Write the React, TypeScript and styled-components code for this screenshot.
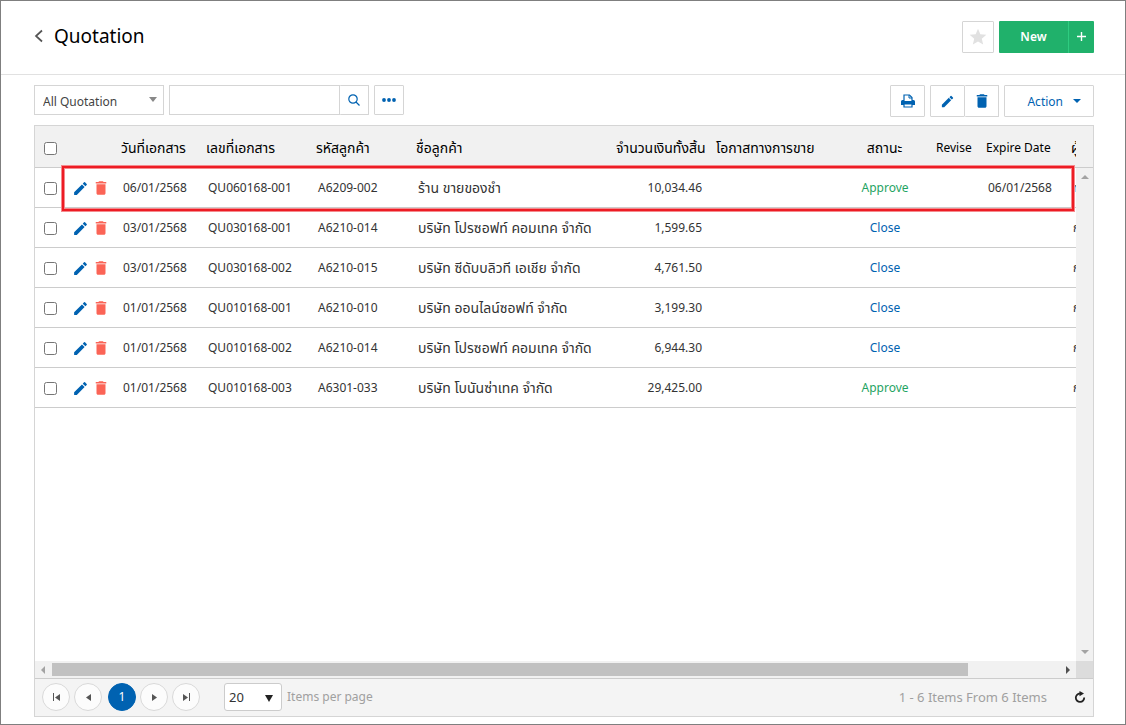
import React from 'react';
import styled, { createGlobalStyle } from 'styled-components';
import { MdDelete, MdEdit, MdStar } from 'react-icons/md';

const BLUE = '#0062b1';
const LINE = '#d5d5d5';

const GlobalStyle = createGlobalStyle`
  *, *::before, *::after { box-sizing: border-box; }
  body {
    margin: 0;
    background: #fff;
    color: #333;
    font-family: Tahoma, "Noto Sans", "Noto Sans Thai", sans-serif;
    font-size: 12px;
  }
  button, input, select { font: inherit; color: inherit; margin: 0; }
  button { cursor: pointer; padding: 0; }
  svg { display: block; flex: none; }
`;

const Page = styled.main`
  display: flex;
  flex-direction: column;
  min-height: 100vh;
  border: 1px solid #7f7f7f;
`;

const TopBar = styled.header`
  display: flex;
  align-items: center;
  justify-content: space-between;
  height: 74px;
  padding: 0 31px 2px 33px;
  border-bottom: 1px solid #e1e1e1;
`;

const TitleGroup = styled.div`
  display: flex;
  align-items: center;
  gap: 10px;
  padding-bottom: 2px;
`;

const BackLink = styled.a`
  color: #555;
`;

const Title = styled.h1`
  margin: 0;
  color: #000;
  font-size: 19px;
  font-weight: 400;
  line-height: 28px;
`;

const Group = styled.div<{ $gap?: number }>`
  display: flex;
  align-items: center;
  gap: ${({ $gap = 5 }) => $gap}px;
`;

const BoxButton = styled.button<{ $width: number; $height?: number; $joined?: boolean }>`
  display: flex;
  align-items: center;
  justify-content: center;
  width: ${({ $width }) => $width}px;
  height: ${({ $height = 32 }) => $height}px;
  border: 1px solid ${LINE};
  border-left-width: ${({ $joined }) => ($joined ? 0 : 1)}px;
  border-radius: 1px;
  background: #fff;
  color: ${BLUE};
`;

const StarButton = styled(BoxButton)`
  color: #e1e1e1;
`;

const NewButton = styled.button<{ $width: number; $split?: boolean }>`
  display: flex;
  align-items: center;
  justify-content: center;
  width: ${({ $width }) => $width}px;
  height: 32px;
  border: 0;
  border-left: ${({ $split }) => ($split ? '1px solid #2ecc80' : '0')};
  border-radius: ${({ $split }) => ($split ? '0 1px 1px 0' : '1px 0 0 1px')};
  background: #20b16b;
  color: #fff;
  font-weight: 600;
`;

const ActionButton = styled(BoxButton)`
  justify-content: flex-end;
  gap: 10px;
  padding-right: 12px;
`;

const Toolbar = styled.div`
  display: flex;
  align-items: flex-start;
  justify-content: space-between;
  padding: 10px 31px 8px 33px;
`;

const SelectWrap = styled.div<{ $width: number }>`
  position: relative;
  width: ${({ $width }) => $width}px;
`;

const ViewSelect = styled.select`
  appearance: none;
  display: block;
  width: 100%;
  height: 30px;
  padding: 2px 8px 0;
  border: 1px solid ${LINE};
  border-radius: 0;
  background: #fff;
  color: #444;
`;

const SizeSelect = styled(ViewSelect)`
  height: 28px;
  padding: 0 4px;
  border-color: #ccc;
  border-radius: 3px;
  color: #333;
  font-size: 13px;
`;

const SelectArrow = styled.svg<{ $top: number; $right: number }>`
  position: absolute;
  top: ${({ $top }) => $top}px;
  right: ${({ $right }) => $right}px;
  pointer-events: none;
`;

const SearchInput = styled.input`
  width: 171px;
  height: 30px;
  padding: 0 8px;
  border: 1px solid ${LINE};
  border-radius: 0;
  outline: 0;
`;

const Panel = styled.section`
  display: flex;
  flex: 1;
  flex-direction: column;
  margin: 0 31px 7px 33px;
  border: 1px solid ${LINE};
`;

const GridArea = styled.div`
  position: relative;
  display: grid;
  flex: 1;
  grid-template-columns: minmax(0, 1fr) 17px;
  grid-template-rows: 1fr 17px;
`;

const Viewport = styled.div`
  overflow: hidden;
`;

const Table = styled.table`
  width: 1190px;
  table-layout: fixed;
  border-collapse: separate;
  border-spacing: 0;
`;

type Align = 'left' | 'center' | 'right';

const HeadCell = styled.th<{ $align?: Align; $thai?: boolean }>`
  height: 42px;
  padding: 2px 7px 0 6px;
  border-bottom: 1px solid #ccc;
  background: #f1f1f1;
  color: #000;
  font-size: ${({ $thai }) => ($thai ? 14 : 12)}px;
  font-weight: 400;
  line-height: 20px;
  text-align: ${({ $align = 'left' }) => $align};
  white-space: nowrap;
`;

const Cell = styled.td<{ $align?: Align; $thai?: boolean }>`
  height: 40px;
  padding: 0 8px;
  border-bottom: 1px solid #ccc;
  font-size: ${({ $thai }) => ($thai ? 14 : 12)}px;
  line-height: 20px;
  text-align: ${({ $align = 'left' }) => $align};
  white-space: nowrap;
`;

const CheckHead = styled(HeadCell)`
  padding: 3px 0 0 9px;
`;

const CheckCell = styled(Cell)`
  padding: 2px 0 0 9px;
`;

const ToolCell = styled(Cell)`
  padding: 1px 0 0 4px;
`;

const Check = styled.input`
  display: block;
  width: 13px;
  height: 13px;
`;

const IconButton = styled.button<{ $color: string }>`
  border: 0;
  background: none;
  color: ${({ $color }) => $color};
`;

const StatusLink = styled.a<{ $approved: boolean }>`
  color: ${({ $approved }) => ($approved ? '#1fa463' : BLUE)};
  text-decoration: none;
`;

const RowHighlight = styled.div`
  position: absolute;
  top: 40px;
  right: 19px;
  left: 27px;
  height: 45px;
  border: 2px solid #ed1c24;
  box-shadow: 0 0 0 1px #f58a8e, inset 0 0 0 1px #f58a8e;
  pointer-events: none;
`;

const Side = styled.div`
  display: flex;
  flex-direction: column;
  background: #f1f1f1;
`;

const SideHead = styled.div`
  height: 42px;
  border-bottom: 1px solid #ccc;
`;

const VerticalTrack = styled.div`
  display: flex;
  flex: 1;
  flex-direction: column;
  align-items: center;
  justify-content: space-between;
  padding: 7px 0;
`;

const HorizontalTrack = styled.div`
  display: flex;
  align-items: center;
  padding: 0 6px;
  background: #f1f1f1;
`;

const Thumb = styled.div`
  width: 89%;
  height: 13px;
  margin: 0 auto 0 7px;
  background: #c1c1c1;
`;

const Corner = styled.div`
  background: #dcdcdc;
`;

const Footer = styled.footer`
  display: flex;
  align-items: center;
  justify-content: space-between;
  height: 38px;
  padding: 0 7px 2px;
  border-top: 1px solid #ccc;
  background: #f4f4f4;
  color: #a0a0a0;
`;

const Pager = styled.nav`
  display: flex;
  gap: 4px;
  margin-right: 19px;
`;

const PageButton = styled.button<{ $current?: boolean }>`
  display: flex;
  align-items: center;
  justify-content: center;
  width: 28px;
  height: 28px;
  margin-left: ${({ $current }) => ($current ? 2 : 0)}px;
  border: 1px solid ${({ $current }) => ($current ? BLUE : '#d9d9d9')};
  border-radius: 50%;
  background: ${({ $current }) => ($current ? BLUE : '#fcfcfc')};
  color: ${({ $current }) => ($current ? '#fff' : '#555')};
`;

const FooterText = styled.span`
  line-height: 20px;
`;

const Summary = styled(FooterText)`
  font-size: 13px;
`;

const Triangle = ({ dir, color, size = 4 }: { dir: 'up' | 'down' | 'left' | 'right'; color: string; size?: number }) => {
  const s = size;
  const shapes = {
    up: { w: 2 * s, h: s, d: `M0 ${s}L${s} 0L${2 * s} ${s}z` },
    down: { w: 2 * s, h: s, d: `M0 0H${2 * s}L${s} ${s}z` },
    left: { w: s, h: 2 * s, d: `M${s} 0V${2 * s}L0 ${s}z` },
    right: { w: s, h: 2 * s, d: `M0 0V${2 * s}L${s} ${s}z` },
  };
  const { w, h, d } = shapes[dir];
  return (
    <svg width={w} height={h} aria-hidden="true">
      <path d={d} fill={color} />
    </svg>
  );
};

const PagerIcon = ({ kind }: { kind: 'first' | 'prev' | 'next' | 'last' }) => {
  const paths = {
    first: 'M2 2h1v8H2zM9 3v7L4 6.500z',
    prev: 'M8 3v7L3 6.500z',
    next: 'M3 3v7l5-3.500z',
    last: 'M2 3v7l5-3.500zM8 2h1v8H8z',
  };
  return (
    <svg width="11" height="12" viewBox="0 0 11 12" aria-hidden="true">
      <path d={paths[kind]} fill="#555" />
    </svg>
  );
};

const PrintIcon = () => (
  <svg width="14" height="14" viewBox="0 0 14 14" aria-hidden="true">
    <path d="M3 7V1h5.500L11 3.500V7" fill="#fff" stroke={BLUE} strokeWidth="1.200" />
    <path d="M8 1v3h3" fill="none" stroke={BLUE} />
    <path d="M1.500 6h1.500v1h8V6h1.500A1.500 1.500 0 0 1 14 7.500V11H0V7.500A1.500 1.500 0 0 1 1.500 6z" fill={BLUE} />
    <path d="M3 10h8v3H3z" fill="#fff" stroke={BLUE} strokeWidth="1.200" />
  </svg>
);

interface Quotation {
  date: string;
  no: string;
  code: string;
  name: string;
  total: string;
  status: 'Approve' | 'Close';
  expire?: string;
  owner: string;
}

const rows: Quotation[] = [
  { date: '06/01/2568', no: 'QU060168-001', code: 'A6209-002', name: 'ร้าน ขายของชำ', total: '10,034.46', status: 'Approve', expire: '06/01/2568', owner: 'ท' },
  { date: '03/01/2568', no: 'QU030168-001', code: 'A6210-014', name: 'บริษัท โปรซอฟท์ คอมเทค จำกัด', total: '1,599.65', status: 'Close', owner: 'ก' },
  { date: '03/01/2568', no: 'QU030168-002', code: 'A6210-015', name: 'บริษัท ซีดับบลิวที เอเชีย จำกัด', total: '4,761.50', status: 'Close', owner: 'ก' },
  { date: '01/01/2568', no: 'QU010168-001', code: 'A6210-010', name: 'บริษัท ออนไลน์ซอฟท์ จำกัด', total: '3,199.30', status: 'Close', owner: 'ก' },
  { date: '01/01/2568', no: 'QU010168-002', code: 'A6210-014', name: 'บริษัท โปรซอฟท์ คอมเทค จำกัด', total: '6,944.30', status: 'Close', owner: 'ก' },
  { date: '01/01/2568', no: 'QU010168-003', code: 'A6301-033', name: 'บริษัท โบนันซ่าเทค จำกัด', total: '29,425.00', status: 'Approve', owner: 'ก' },
];

const columnWidths = [33, 47, 85, 110, 100, 200, 100, 130, 90, 50, 85, 160];

export default function App() {
  return (
    <>
      <GlobalStyle />
      <Page>
        <TopBar>
          <TitleGroup>
            <BackLink href="#" aria-label="Back">
              <svg width="10" height="14" viewBox="0 0 10 14">
                <path d="M8 1.500L2 7l6 5.500" fill="none" stroke="currentColor" strokeWidth="1.700" />
              </svg>
            </BackLink>
            <Title>Quotation</Title>
          </TitleGroup>
          <Group>
            <StarButton $width={32} aria-label="Favourite"><MdStar size={20} /></StarButton>
            <Group $gap={0}>
              <NewButton $width={69}>New</NewButton>
              <NewButton $width={26} $split aria-label="New from menu">
                <svg width="9" height="9"><path d="M0 4.500h9M4.500 0v9" stroke="#fff" strokeWidth="1.400" /></svg>
              </NewButton>
            </Group>
          </Group>
        </TopBar>

        <Toolbar>
          <Group>
            <SelectWrap $width={130}>
              <ViewSelect aria-label="View" defaultValue="all"><option value="all">All Quotation</option></ViewSelect>
              <SelectArrow $top={12} $right={7} width="8" height="5"><path d="M0 0h8L4 5z" fill="#888" /></SelectArrow>
            </SelectWrap>
            <Group $gap={0}>
              <SearchInput type="text" aria-label="Search quotations" />
              <BoxButton $width={29} $height={30} $joined aria-label="Search">
                <svg width="12" height="12" viewBox="0 0 12 12" fill="none" stroke="currentColor" strokeWidth="1.200">
                  <circle cx="5" cy="5" r="4.200" /><path d="M8 8l3.500 3.500" />
                </svg>
              </BoxButton>
            </Group>
            <BoxButton $width={30} $height={30} aria-label="More filters">
              <svg width="14" height="4" fill="currentColor"><circle cx="2" cy="2" r="1.900" /><circle cx="7" cy="2" r="1.900" /><circle cx="12" cy="2" r="1.900" /></svg>
            </BoxButton>
          </Group>
          <Group>
            <BoxButton $width={35} aria-label="Print"><PrintIcon /></BoxButton>
            <Group $gap={0}>
              <BoxButton $width={35} aria-label="Edit"><MdEdit size={15} /></BoxButton>
              <BoxButton $width={34} $joined aria-label="Delete"><MdDelete size={18} /></BoxButton>
            </Group>
            <ActionButton $width={90}>Action<Triangle dir="down" color={BLUE} /></ActionButton>
          </Group>
        </Toolbar>

        <Panel>
          <GridArea>
            <Viewport>
              <Table>
                <colgroup>{columnWidths.map((w, i) => <col key={i} width={w} />)}</colgroup>
                <thead>
                  <tr>
                    <CheckHead><Check type="checkbox" aria-label="Select all" /></CheckHead>
                    <HeadCell />
                    <HeadCell $thai>วันที่เอกสาร</HeadCell>
                    <HeadCell $thai>เลขที่เอกสาร</HeadCell>
                    <HeadCell $thai>รหัสลูกค้า</HeadCell>
                    <HeadCell $thai>ชื่อลูกค้า</HeadCell>
                    <HeadCell $thai $align="right">จำนวนเงินทั้งสิ้น</HeadCell>
                    <HeadCell $thai>โอกาสทางการขาย</HeadCell>
                    <HeadCell $thai $align="center">สถานะ</HeadCell>
                    <HeadCell>Revise</HeadCell>
                    <HeadCell>Expire Date</HeadCell>
                    <HeadCell $thai>ผู้บันทึก</HeadCell>
                  </tr>
                </thead>
                <tbody>
                  {rows.map((r) => (
                    <tr key={r.no}>
                      <CheckCell><Check type="checkbox" aria-label={`Select ${r.no}`} /></CheckCell>
                      <ToolCell>
                        <Group $gap={3}>
                          <IconButton $color={BLUE} aria-label={`Edit ${r.no}`}><MdEdit size={17} /></IconButton>
                          <IconButton $color="#fb6456" aria-label={`Delete ${r.no}`}><MdDelete size={18} /></IconButton>
                        </Group>
                      </ToolCell>
                      <Cell>{r.date}</Cell>
                      <Cell>{r.no}</Cell>
                      <Cell>{r.code}</Cell>
                      <Cell $thai>{r.name}</Cell>
                      <Cell $align="right">{r.total}</Cell>
                      <Cell />
                      <Cell $align="center"><StatusLink href="#" $approved={r.status === 'Approve'}>{r.status}</StatusLink></Cell>
                      <Cell />
                      <Cell>{r.expire}</Cell>
                      <Cell>{r.owner}</Cell>
                    </tr>
                  ))}
                </tbody>
              </Table>
            </Viewport>
            <Side>
              <SideHead />
              <VerticalTrack>
                <Triangle dir="up" color="#a3a3a3" />
                <Triangle dir="down" color="#a3a3a3" />
              </VerticalTrack>
            </Side>
            <HorizontalTrack>
              <Triangle dir="left" color="#a3a3a3" />
              <Thumb />
              <Triangle dir="right" color="#505050" />
            </HorizontalTrack>
            <Corner />
            <RowHighlight />
          </GridArea>

          <Footer>
            <Group>
              <Pager aria-label="Pages">
                <PageButton aria-label="First page"><PagerIcon kind="first" /></PageButton>
                <PageButton aria-label="Previous page"><PagerIcon kind="prev" /></PageButton>
                <PageButton $current>1</PageButton>
                <PageButton aria-label="Next page"><PagerIcon kind="next" /></PageButton>
                <PageButton aria-label="Last page"><PagerIcon kind="last" /></PageButton>
              </Pager>
              <SelectWrap $width={58}>
                <SizeSelect id="page-size" defaultValue="20"><option>20</option></SizeSelect>
                <SelectArrow $top={12} $right={9} width="8" height="7"><path d="M0 0h8L4 7z" fill="#222" /></SelectArrow>
              </SelectWrap>
              <FooterText as="label" htmlFor="page-size">Items per page</FooterText>
            </Group>
            <Group $gap={27}>
              <Summary>1 - 6 Items From 6 Items</Summary>
              <IconButton $color="#222" aria-label="Refresh">
                <svg width="12" height="12" viewBox="0 0 12 12">
                  <path d="M6 2.500A4.200 4.200 0 1 0 10.200 6.500" fill="none" stroke="currentColor" strokeWidth="1.800" />
                  <path d="M5.500 0l4.500 2.500L5.500 5.200z" fill="currentColor" />
                </svg>
              </IconButton>
            </Group>
          </Footer>
        </Panel>
      </Page>
    </>
  );
}
